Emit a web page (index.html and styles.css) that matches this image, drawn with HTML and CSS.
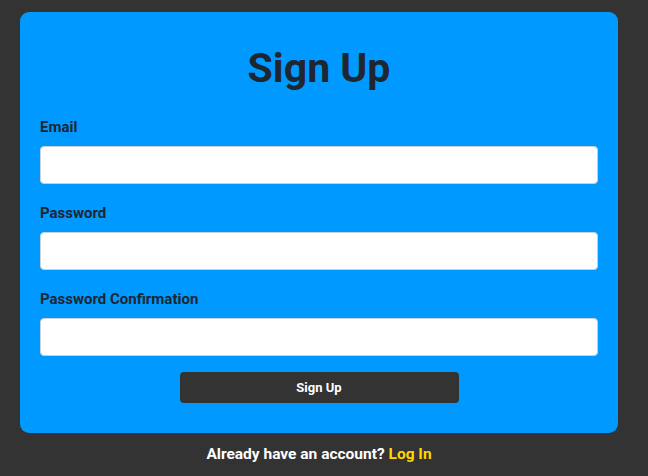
FILE: index.html
```html
<!DOCTYPE html>
<html>
<head>
<meta charset="utf-8">
<link rel="stylesheet" href="styles.css">
</head>
<body>
<div class="page">
  <form class="card">
    <h1 class="title">Sign Up</h1>
    <label class="label" for="email">Email</label>
    <input class="input" id="email" type="email">
    <label class="label" for="password">Password</label>
    <input class="input" id="password" type="password">
    <label class="label" for="confirm">Password Confirmation</label>
    <input class="input" id="confirm" type="password">
    <button class="submit" type="button">Sign Up</button>
  </form>
  <p class="footer">Already have an account? <a class="login" href="#">Log In</a></p>
</div>
</body>
</html>
```
FILE: styles.css
```css
html, body {
  margin: 0;
  padding: 0;
  background: #333333;
}
.page {
  padding: 12px 30px 0 20px;
  font-family: Roboto, "Liberation Sans", sans-serif;
  font-weight: bold;
}
.card {
  background: #0099ff;
  border-radius: 9px;
  padding: 32px 20px 30px;
  display: flex;
  flex-direction: column;
}
.title {
  margin: 0 0 26px;
  text-align: center;
  font-size: 41px;
  line-height: 48px;
  font-weight: bold;
  color: #1e2630;
}
.label {
  font-size: 15px;
  line-height: 18px;
  color: #1e2630;
  margin-bottom: 10px;
}
.input {
  box-sizing: border-box;
  height: 38px;
  border: 1px solid #c8d0d8;
  border-radius: 4px;
  background: #fff;
  margin: 0 0 20px;
  padding: 0 10px;
}
.input:last-of-type {
  margin-bottom: 16px;
}
.submit {
  align-self: center;
  width: 279px;
  height: 31px;
  border: none;
  border-radius: 4px;
  background: #333333;
  color: #fff;
  font-family: inherit;
  font-weight: bold;
  font-size: 13px;
}
.footer {
  margin: 11px 0 0;
  text-align: center;
  color: #fff;
  font-size: 15.5px;
  line-height: 20px;
}
.login {
  color: #ffd700;
  text-decoration: none;
}
```
